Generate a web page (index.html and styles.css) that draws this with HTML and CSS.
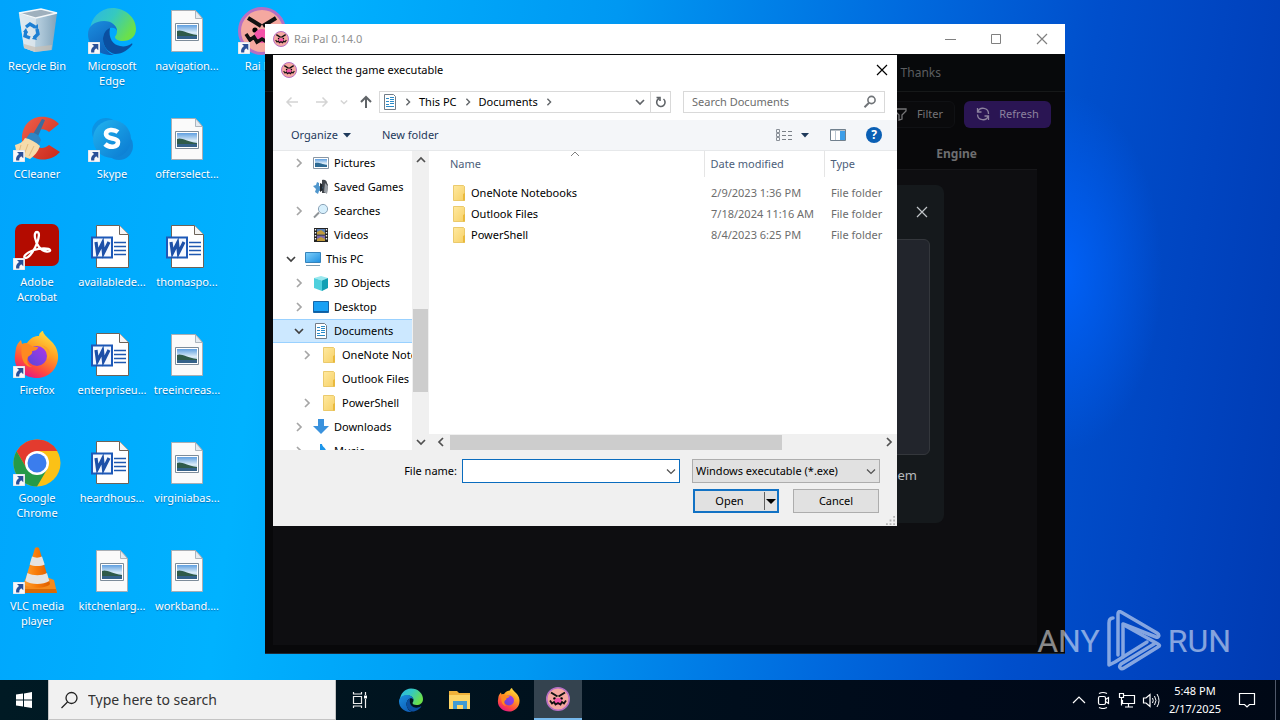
FILE: index.html
```html
<!DOCTYPE html>
<html lang="en">
<head>
<meta charset="utf-8">
<title>Desktop</title>
<link rel="stylesheet" href="styles.css">
</head>
<body>
<svg class="sprite" aria-hidden="true">
  <defs>
    <linearGradient id="g-bin" x1="0" x2="1"><stop offset="0" stop-color="#dfe5ea"/><stop offset=".55" stop-color="#c3cdd6"/><stop offset="1" stop-color="#8fa2b2"/></linearGradient>
    <linearGradient id="g-edge1" x1="0" y1="0" x2="1" y2=".5"><stop offset="0" stop-color="#2bb5e8"/><stop offset=".5" stop-color="#35c9c0"/><stop offset="1" stop-color="#6be04a"/></linearGradient>
    <linearGradient id="g-edge2" x1="0" y1="0" x2=".6" y2="1"><stop offset="0" stop-color="#1a8fe0"/><stop offset="1" stop-color="#0f5fb8"/></linearGradient>
    <linearGradient id="g-sky" x1="0" y1="0" x2="0" y2="1"><stop offset="0" stop-color="#5f9fe0"/><stop offset=".55" stop-color="#dcecf8"/><stop offset="1" stop-color="#7fb0d0"/></linearGradient>
    <linearGradient id="g-skype" x1="0" y1="0" x2="1" y2="1"><stop offset="0" stop-color="#22b4f0"/><stop offset="1" stop-color="#0a78d0"/></linearGradient>
    <linearGradient id="g-fox" x1=".8" y1="0" x2=".3" y2="1"><stop offset="0" stop-color="#ffe545"/><stop offset=".4" stop-color="#ffa023"/><stop offset=".75" stop-color="#ff4a3f"/><stop offset="1" stop-color="#e31587"/></linearGradient>
    <linearGradient id="g-globe" x1="1" y1="0" x2="0" y2="1"><stop offset="0" stop-color="#b035e8"/><stop offset="1" stop-color="#5548d8"/></linearGradient>
    <linearGradient id="g-cc" x1="0" y1="0" x2="1" y2="1"><stop offset="0" stop-color="#f0604a"/><stop offset="1" stop-color="#c8281c"/></linearGradient>
    <linearGradient id="g-folder" x1="0" y1="0" x2="1" y2="1"><stop offset="0" stop-color="#ffe9a0"/><stop offset="1" stop-color="#f7d167"/></linearGradient>
    <linearGradient id="g-pc" x1="0" y1="0" x2="1" y2="1"><stop offset="0" stop-color="#7fd0fb"/><stop offset="1" stop-color="#1e8fe0"/></linearGradient>
    <linearGradient id="g-cone" x1="0" x2="1"><stop offset="0" stop-color="#ffa030"/><stop offset=".5" stop-color="#f87a08"/><stop offset="1" stop-color="#dd5e00"/></linearGradient>
  </defs>
  <symbol id="shortcut" viewBox="0 0 12 12"><path d="M0 0h12v12H0z" fill="#f8f8fa" stroke="#b8c8d8" stroke-width=".6"/><path d="M4 2h6.300v6.200L8.200 6.200Q5.800 7.500 6.200 10.600H3.200Q2.300 6.800 6 4.100z" fill="#2a5098"/></symbol>
  <symbol id="bin" viewBox="0 0 48 48"><path d="M6 6l22-4 16 4-5 37-17 2-11-4z" fill="url(#g-bin)" opacity=".9"/><path d="M6 6l22-4 16 4-21 5z" fill="#9fb0bd" stroke="#f4f8fa" stroke-width="1.300"/><path d="M23 11l-1 34-11-4L6 7z" fill="#eef1f4" opacity=".6"/><path d="M11 37l11 3 17-2-1 5-16 2-11-4z" fill="#c7bfb4" opacity=".7"/><g fill="none" stroke="#1c7fd4" stroke-width="3.400"><path d="M13 20l4-3 5 3"/><path d="M24 22l1 5-4 4"/><path d="M17 31l-5-2 1-5"/></g><path d="M20 21l5 1 0-5zM22 28l-3 4 5 1zM10 25l5 1-2-5z" fill="#1c7fd4"/></symbol>
  <symbol id="edge" viewBox="0 0 48 48"><path d="M2 24A23 23 0 0 1 24 1c14 0 24 10 24 21 0 8-6 12-13 12-5 0-8-2-8-4 0-1 2-2 2-6 0-5-5-9-12-9C9 15 3 19 2 24z" fill="url(#g-edge1)"/><path d="M0 27c0-8 7-13 16-13 8 0 13 5 13 10-1-3-4-4-7-3-4 1-7 6-7 11 0 7 5 14 11 16C12 49 0 40 0 27z" fill="url(#g-edge2)"/><path d="M22 21c-4 1-7 6-7 11 0 8 6 14 12 15 8 0 14-5 17-9 1-1 0-2-1-1-3 2-7 3-11 2-7-1-12-8-10-18z" fill="#0b4fa0"/></symbol>
  <symbol id="photo" viewBox="0 0 48 48"><path d="M8.500 3.500h24l7 8v33h-31z" fill="#fafafa" stroke="#a9aeb4"/><path d="M32.500 3.500v8h7z" fill="#e4eaf0" stroke="#9aa4ae" stroke-width=".8"/><path d="M12.500 16.500h23v17h-23z" fill="#fff" stroke="#7d8c9a"/><path d="M14 18h20v14H14z" fill="url(#g-sky)"/><path d="M14 24c4-2 9 2 20 4v1H14z" fill="#2f5b4a"/><path d="M14 29h20v3H14z" fill="#35628a"/></symbol>
  <symbol id="word" viewBox="0 0 48 48"><path d="M8.500 2.500h23l9 9v33h-32z" fill="#fff" stroke="#6d6258"/><path d="M31.500 2.500v9h9" fill="#f4f4f4" stroke="#6d6258"/><path d="M26 19.500h12M26 23.500h12M26 27.500h12M26 31.500h12" stroke="#1f58b0" stroke-width="1.300"/><path d="M4 14.500h20v20H4z" fill="#f4f8ff" stroke="#1d59b8" stroke-width="2"/><path d="M8 19l1.500 11 5-10 1 10 5.500-11" fill="none" stroke="#1d50a8" stroke-width="3.200"/></symbol>
  <symbol id="ccleaner" viewBox="0 0 48 48"><path d="M46 9C34-4 9 0 9 24c0 19 24 28 38 13L36 30c-7 6-16 2-16-6s9-13 16-7z" fill="url(#g-cc)"/><path d="M29 4l3 1-9 21-6-2z" fill="#3a6d9e"/><path d="M17 18c5-1 9 2 11 7l-3 7-13-7z" fill="#2f86c4"/><path d="M12 23c5 1 11 4 15 8-2 6-6 10-10 13L2 38c2-3 0-6 0-8 4-1 8-3 10-7z" fill="#f6dcab"/><path d="M8 30l-2 7M15 29l-4 11M21 31l-5 10" stroke="#e2bb80" stroke-width="1" fill="none"/></symbol>
  <symbol id="skype" viewBox="0 0 48 48"><circle cx="18" cy="17" r="14" fill="#0c94e4"/><circle cx="31" cy="31" r="14" fill="#0f86d8"/><circle cx="24" cy="24" r="19" fill="url(#g-skype)"/><path d="M30 17c-4-3-12-3-12 2 0 6 12 3 12 8 0 6-9 6-13 2" fill="none" stroke="#fff" stroke-width="4.600"/></symbol>
  <symbol id="acrobat" viewBox="0 0 48 48"><rect x="2" y="1" width="44" height="42" rx="7" fill="#b30b00"/><path d="M24 9c3 0 2 6 0 11-2 6-7 14-11 15-4 0-1-5 8-8 6-2 15-2 16 0s-6 3-11-3c-4-5-6-15-2-15z" fill="none" stroke="#fff" stroke-width="2.300"/></symbol>
  <symbol id="firefox" viewBox="0 0 48 48"><path d="M3 17c1-4 3-6 5-8l1 4 5-1c4-6 8-7 12-7 0-3 3-5 4-5 1 7 14 10 15 24 1 13-9 23-21 23S0 38 2 24z" fill="url(#g-fox)"/><circle cx="24" cy="25" r="10" fill="url(#g-globe)"/><path d="M9 13c5-2 8 1 11 3h5c0 3-4 4-6 4 1 3-2 4-4 6-2 5 0 8 4 10C10 36 7 25 9 13z" fill="#ff8a20"/><path d="M28 14c6 3 8 9 6 14 5-3 4-12-6-14z" fill="#ff9f28"/></symbol>
  <symbol id="chrome" viewBox="0 0 48 48"><circle cx="24" cy="24" r="23.500" fill="#fbc116"/><path d="M24 .5A23.500 23.500 0 0 0 3.600 12.300L14 30l10-18h20.500A23.500 23.500 0 0 0 24 .5z" fill="#e33b2e"/><path d="M3.600 12.300A23.500 23.500 0 0 0 24 47.500L34.300 30 24 36 14 30z" fill="#259a48"/><circle cx="24" cy="24" r="12" fill="#fff"/><circle cx="24" cy="24" r="9.500" fill="#3b7ded"/></symbol>
  <symbol id="vlc" viewBox="0 0 48 48"><path d="M13 31h23l5 2 3 13H6z" fill="#f58a1d"/><path d="M6 46l2-4h35l1 4z" fill="#d96a06"/><path d="M22 1c1-1 3-1 4 0l11 36c-4 5-21 5-26 0z" fill="url(#g-cone)"/><path d="M19 9.500c3 1.500 7 1.500 10 0l2.700 8c-4 2-11 2-15 0zM14.400 26c6 3 14 3 19.600 0l2.300 8c-6 4-18 4-24 0z" fill="#e6e3e0"/></symbol>
  <symbol id="raipal" viewBox="0 0 48 48"><circle cx="24" cy="24" r="22.500" fill="#f5a8a0" stroke="#b56fc4" stroke-width="3"/><path d="M10 11l13 8M38 11l-13 8" stroke="#111" stroke-width="4"/><circle cx="17" cy="23" r="2.600"/><circle cx="31" cy="23" r="2.600"/><ellipse cx="24" cy="29" rx="8" ry="7" fill="#f453a8"/><path d="M8 27l4 6 4-3 3 5 5-3 5 3 3-5 4 3 4-6" fill="none" stroke="#111" stroke-width="3.500"/></symbol>
  <symbol id="doc" viewBox="0 0 16 16"><path d="M2.500.5h9l2 2v13h-11z" fill="#fff" stroke="#707c88"/><path d="M4 4.500h3M4 7.500h3M4 10.500h3M4 12.500h8M8 3.500h4M8 5.500h4M8 7.500h4M8 9.500h4" stroke="#2b8bc8"/></symbol>
  <symbol id="folder" viewBox="0 0 16 16"><path d="M2.500.5h10l1 1v14h-11z" fill="url(#g-folder)" stroke="#e6c056" stroke-width=".8"/><path d="M12 9l2-1v7.500h-2z" fill="#e9b93c"/></symbol>
  <symbol id="pictures" viewBox="0 0 16 16"><path d="M.5 2.500h15v11H.5z" fill="#fff" stroke="#8896a4"/><path d="M2 4h12v8H2z" fill="url(#g-sky)"/><path d="M2 8c4-1 6 1 12 2v2H2z" fill="#2d6a94"/></symbol>
  <symbol id="games" viewBox="0 0 16 16"><path d="M9 1c3-1 5 1 5 3l1 2-1 8h-5z" fill="#41464c"/><path d="M12 4l3 3-1 8-3-2z" fill="#9aa0a6"/><path d="M0 7l3-1 1-3 2 1v3l4 1v3l-4 1-1 3-3-2 1-3z" fill="#4f96cc"/><path d="M7 4l2 1 1 6-3 2z" fill="#22272c"/></symbol>
  <symbol id="searches" viewBox="0 0 16 16"><path d="M1 14.500l5-5" stroke="#8f9498" stroke-width="2"/><circle cx="10" cy="6" r="4.600" fill="#d6effc" stroke="#8ba4b8"/></symbol>
  <symbol id="videos" viewBox="0 0 16 16"><path d="M1 1h14v14H1z" fill="#222"/><path d="M4 2h8v5.500H4z" fill="#5a80b4"/><path d="M4 8.500h8V14H4z" fill="#7a68b0"/><path d="M4 5l4-2 4 3v1.500H4zM4 12l4-2 4 2v2H4z" fill="#c09a3c"/><path d="M2.500 2v12M13.500 2v12" stroke="#f4f4f4" stroke-width="1.400" stroke-dasharray="1.500 1.500"/></symbol>
  <symbol id="pc" viewBox="0 0 16 16"><path d="M.5 1.500h15v10H.5z" fill="url(#g-pc)" stroke="#3583bb"/><path d="M1 14.500h14" stroke="#7b9bb0"/></symbol>
  <symbol id="cube" viewBox="0 0 16 16"><path d="M1 3l7-2 7 2-6 2.500z" fill="#9ae8ee"/><path d="M1 3l8 2.500V16l-8-3z" fill="#4fd0dd"/><path d="M15 3L9 5.500V16l6-3z" fill="#12a0b4"/></symbol>
  <symbol id="screen" viewBox="0 0 16 16"><path d="M.5 2.500h15v11H.5z" fill="#18a0f4" stroke="#1565a8"/><path d="M1 12.500h14" stroke="#0b5fa4"/></symbol>
  <symbol id="down" viewBox="0 0 16 16"><path d="M5 0h6v7h5l-8 8-8-8h5z" fill="#3a92dd"/></symbol>
  <symbol id="music" viewBox="0 0 16 16"><path d="M7 1l2 0c0 3 5 4 4 9l-3-3v6a4 3 0 1 1-3-2z" fill="#1d96ea"/></symbol>
  <symbol id="chev-r" viewBox="0 0 10 10"><path d="M3 1l4 4-4 4" fill="none" stroke="currentColor" stroke-width="1.700"/></symbol>
  <symbol id="chev-d" viewBox="0 0 10 10"><path d="M1 3l4 4 4-4" fill="none" stroke="currentColor" stroke-width="1.700"/></symbol>
  <symbol id="chev-l" viewBox="0 0 10 10"><path d="M7 1L3 5l4 4" fill="none" stroke="currentColor" stroke-width="1.700"/></symbol>
  <symbol id="chev-u" viewBox="0 0 10 10"><path d="M1 7l4-4 4 4" fill="none" stroke="currentColor" stroke-width="1.700"/></symbol>
  <symbol id="thin-u" viewBox="0 0 10 10"><path d="M1 7l4-4 4 4" fill="none" stroke="currentColor"/></symbol>
  <symbol id="thin-d" viewBox="0 0 10 10"><path d="M1 3.500l4 4 4-4" fill="none" stroke="currentColor" stroke-width="1.200"/></symbol>
  <symbol id="caret" viewBox="0 0 10 10"><path d="M1 3h8L5 7.500z" fill="currentColor"/></symbol>
  <symbol id="arrow-l" viewBox="0 0 14 14"><path d="M13 7H2M6.500 2.500L2 7l4.500 4.500" fill="none" stroke="currentColor" stroke-width="1.500"/></symbol>
  <symbol id="arrow-r" viewBox="0 0 14 14"><path d="M1 7h11M7.500 2.500L12 7l-4.500 4.500" fill="none" stroke="currentColor" stroke-width="1.500"/></symbol>
  <symbol id="arrow-u" viewBox="0 0 14 14"><path d="M7 13V2M2 7l5-5 5 5" fill="none" stroke="currentColor" stroke-width="2"/></symbol>
  <symbol id="close" viewBox="0 0 12 12"><path d="M1 1l10 10M11 1L1 11" fill="none" stroke="currentColor" stroke-width="1.200"/></symbol>
  <symbol id="lens" viewBox="0 0 14 14"><circle cx="8.500" cy="5" r="3.600" fill="none" stroke="currentColor" stroke-width="1.600"/><path d="M6 7.800L1.500 12.300" stroke="currentColor" stroke-width="2"/></symbol>
  <symbol id="sync" viewBox="0 0 14 14"><path d="M1.500 1v4h4M12.500 13V9h-4M1.800 5A5.500 5.500 0 0 1 12.500 7M12.200 9A5.500 5.500 0 0 1 1.500 7.500" fill="none" stroke="currentColor" stroke-width="1.300"/></symbol>
</svg>

<main class="desktop">
  <ul class="icons">
    <li><svg><use href="#bin"/></svg><span>Recycle Bin</span></li>
    <li><svg><use href="#ccleaner"/></svg><svg class="badge"><use href="#shortcut"/></svg><span>CCleaner</span></li>
    <li><svg><use href="#acrobat"/></svg><svg class="badge"><use href="#shortcut"/></svg><span>Adobe Acrobat</span></li>
    <li><svg><use href="#firefox"/></svg><svg class="badge"><use href="#shortcut"/></svg><span>Firefox</span></li>
    <li><svg><use href="#chrome"/></svg><svg class="badge"><use href="#shortcut"/></svg><span>Google Chrome</span></li>
    <li><svg><use href="#vlc"/></svg><svg class="badge"><use href="#shortcut"/></svg><span>VLC media player</span></li>
    <li><svg><use href="#edge"/></svg><svg class="badge"><use href="#shortcut"/></svg><span>Microsoft Edge</span></li>
    <li><svg><use href="#skype"/></svg><svg class="badge"><use href="#shortcut"/></svg><span>Skype</span></li>
    <li><svg><use href="#word"/></svg><span>availablede...</span></li>
    <li><svg><use href="#word"/></svg><span>enterpriseu...</span></li>
    <li><svg><use href="#word"/></svg><span>heardhous...</span></li>
    <li><svg><use href="#photo"/></svg><span>kitchenlarg...</span></li>
    <li><svg><use href="#photo"/></svg><span>navigation...</span></li>
    <li><svg><use href="#photo"/></svg><span>offerselect...</span></li>
    <li><svg><use href="#word"/></svg><span>thomaspo...</span></li>
    <li><svg><use href="#photo"/></svg><span>treeincreas...</span></li>
    <li><svg><use href="#photo"/></svg><span>virginiabas...</span></li>
    <li><svg><use href="#photo"/></svg><span>workband....</span></li>
    <li><svg><use href="#raipal"/></svg><svg class="badge"><use href="#shortcut"/></svg><span>Rai Pal</span></li>
  </ul>

  <section class="app" aria-label="Rai Pal">
    <header class="app-title">
      <svg class="i16"><use href="#raipal"/></svg><span>Rai Pal 0.14.0</span>
      <div class="win-buttons">
        <button aria-label="Minimize"><svg class="i12" viewBox="0 0 12 12"><path d="M1 6.500h11" stroke="currentColor"/></svg></button>
        <button aria-label="Maximize"><svg class="i12" viewBox="0 0 12 12"><path d="M1.500 1.500h9v9h-9z" fill="none" stroke="currentColor"/></svg></button>
        <button aria-label="Close"><svg class="i12"><use href="#close"/></svg></button>
      </div>
    </header>
    <nav class="app-nav"><a href="#thanks">Thanks</a></nav>
    <div class="app-tools">
      <button class="filter"><svg class="i14" viewBox="0 0 14 14"><path d="M1 2h11v2L8 8v4l-3 1V8L1 4z" fill="none" stroke="currentColor" stroke-width="1.300"/></svg>Filter</button>
      <button class="refresh"><svg class="i14"><use href="#sync"/></svg>Refresh</button>
    </div>
    <div class="app-grid"><div class="grid-head">Engine</div></div>
    <div class="modal">
      <button class="modal-close" aria-label="Close dialog"><svg class="i12"><use href="#close"/></svg></button>
      <div class="drop"></div>
      <p>them</p>
    </div>
  </section>

  <section class="dialog" role="dialog" aria-label="Select the game executable">
    <header class="dlg-title">
      <svg class="i16"><use href="#raipal"/></svg><span>Select the game executable</span>
      <button aria-label="Close"><svg class="i12"><use href="#close"/></svg></button>
    </header>
    <div class="dlg-nav">
      <div class="history">
        <button class="off" aria-label="Back"><svg class="i14"><use href="#arrow-l"/></svg></button>
        <button class="off" aria-label="Forward"><svg class="i14"><use href="#arrow-r"/></svg></button>
        <button class="off small" aria-label="Recent"><svg class="i8"><use href="#chev-d"/></svg></button>
        <button aria-label="Up"><svg class="i14"><use href="#arrow-u"/></svg></button>
      </div>
      <div class="address">
        <svg class="i16"><use href="#doc"/></svg>
        <svg class="i8 sep"><use href="#chev-r"/></svg><span>This PC</span>
        <svg class="i8 sep"><use href="#chev-r"/></svg><span>Documents</span>
        <svg class="i8 sep"><use href="#chev-r"/></svg>
        <button class="drop-btn" aria-label="Previous locations"><svg class="i10"><use href="#chev-d"/></svg></button>
        <button class="reload" aria-label="Refresh"><svg class="i12" viewBox="0 0 12 12"><path d="M8.500 3A4.200 4.200 0 1 1 4 2.500M1.500 1.500H5V5" fill="none" stroke="currentColor" stroke-width="1.600"/></svg></button>
      </div>
      <label class="search"><input type="text" placeholder="Search Documents" aria-label="Search Documents"><svg class="i14"><use href="#lens"/></svg></label>
    </div>
    <div class="dlg-tools">
      <button>Organize<svg class="i10"><use href="#caret"/></svg></button>
      <button class="new">New folder</button>
      <button class="view" aria-label="Change view"><svg class="i16" viewBox="0 0 16 16"><path d="M.5 2.500h3v3h-3zM.5 6.500h3v3h-3zM.5 10.500h3v3h-3z" fill="none" stroke="#8a9098"/><path d="M6 4.500h4M12 4.500h4M6 8.500h4M12 8.500h4M6 12.500h4M12 12.500h4" stroke="#7a8088"/></svg><svg class="i10"><use href="#caret"/></svg></button>
      <button class="pane" aria-label="Preview pane"><svg class="i16" viewBox="0 0 16 16"><path d="M.5 2.500h15v11H.5z" fill="#fff" stroke="#71808e"/><path d="M.5 3h15" stroke="#71808e"/><path d="M10 4h5v9h-5z" fill="#3d9ee8"/><path d="M5.500 4v9" stroke="#b8c4d0"/></svg></button>
      <button class="help" aria-label="Help">?</button>
    </div>
    <div class="dlg-main">
      <ul class="tree">
        <li><svg class="i10 tw"><use href="#chev-r"/></svg><svg class="i16"><use href="#pictures"/></svg>Pictures</li>
        <li><i class="tw"></i><svg class="i16"><use href="#games"/></svg>Saved Games</li>
        <li><svg class="i10 tw"><use href="#chev-r"/></svg><svg class="i16"><use href="#searches"/></svg>Searches</li>
        <li><i class="tw"></i><svg class="i16"><use href="#videos"/></svg>Videos</li>
        <li class="root"><svg class="i10 tw open"><use href="#chev-d"/></svg><svg class="i16"><use href="#pc"/></svg>This PC</li>
        <li><svg class="i10 tw"><use href="#chev-r"/></svg><svg class="i16"><use href="#cube"/></svg>3D Objects</li>
        <li><svg class="i10 tw"><use href="#chev-r"/></svg><svg class="i16"><use href="#screen"/></svg>Desktop</li>
        <li class="selected"><svg class="i10 tw open"><use href="#chev-d"/></svg><svg class="i16"><use href="#doc"/></svg>Documents</li>
        <li class="child"><svg class="i10 tw"><use href="#chev-r"/></svg><svg class="i16"><use href="#folder"/></svg>OneNote Notebooks</li>
        <li class="child"><i class="tw"></i><svg class="i16"><use href="#folder"/></svg>Outlook Files</li>
        <li class="child"><svg class="i10 tw"><use href="#chev-r"/></svg><svg class="i16"><use href="#folder"/></svg>PowerShell</li>
        <li><svg class="i10 tw"><use href="#chev-r"/></svg><svg class="i16"><use href="#down"/></svg>Downloads</li>
        <li><svg class="i10 tw"><use href="#chev-r"/></svg><svg class="i16"><use href="#music"/></svg>Music</li>
      </ul>
      <div class="vscroll"><svg class="i10"><use href="#chev-u"/></svg><div class="track"><div class="thumb"></div></div><svg class="i10"><use href="#chev-d"/></svg></div>
      <div class="list">
        <svg class="i10 sort"><use href="#thin-u"/></svg>
        <table>
          <thead><tr><th>Name</th><th class="date">Date modified</th><th class="type">Type</th></tr></thead>
          <tbody>
            <tr><td><div class="cell"><svg class="i16"><use href="#folder"/></svg>OneNote Notebooks</div></td><td>2/9/2023 1:36 PM</td><td>File folder</td></tr>
            <tr><td><div class="cell"><svg class="i16"><use href="#folder"/></svg>Outlook Files</div></td><td>7/18/2024 11:16 AM</td><td>File folder</td></tr>
            <tr><td><div class="cell"><svg class="i16"><use href="#folder"/></svg>PowerShell</div></td><td>8/4/2023 6:25 PM</td><td>File folder</td></tr>
          </tbody>
        </table>
        <div class="hscroll"><svg class="i10"><use href="#chev-l"/></svg><div class="track"><div class="thumb"></div></div><svg class="i10"><use href="#chev-r"/></svg></div>
      </div>
    </div>
    <footer class="dlg-foot">
      <div class="foot-row">
        <label for="file-name">File name:</label>
        <div class="combo name-box"><input id="file-name" type="text"><svg class="i10"><use href="#thin-d"/></svg></div>
        <div class="combo type-box"><select aria-label="File type"><option>Windows executable (*.exe)</option></select><svg class="i10"><use href="#thin-d"/></svg></div>
      </div>
      <div class="foot-row actions">
        <div class="split"><button class="open">Open</button><button class="more" aria-label="Open options"><svg class="i12" viewBox="0 0 12 12"><path d="M1 4h10L6 9z" fill="#000"/></svg></button></div>
        <button class="cancel">Cancel</button>
      </div>
      <svg class="grip" viewBox="0 0 10 10"><path d="M8 0h2v2H8zM4 4h2v2H4zM8 4h2v2H8zM0 8h2v2H0zM4 8h2v2H4zM8 8h2v2H8z" fill="#b4b4b4"/></svg>
    </footer>
  </section>

  <div class="watermark">
    <span>ANY</span>
    <svg viewBox="0 0 56 62"><g fill="none" stroke="currentColor" stroke-width="3.500" stroke-linejoin="round" stroke-linecap="round"><path d="M7 8C4 8 3 10 3 13v42l6-3 32-20"/><path d="M12 45V4c0-2 1-3 3-2l36 21c3 2 2 5-1 4L17 14v33"/><path d="M18 15l34 19c2 1 2 2 0 3L18 58c-3 2-6-1-3-4l33-20"/></g></svg>
    <span>RUN</span>
  </div>
</main>

<footer class="taskbar">
  <button class="start" aria-label="Start"><svg class="i16" viewBox="0 0 16 16"><path d="M0 2.500L7 1.500V7.500H0zM8 1.400L16 0v7.500H8zM0 8.500h7v6L0 13.500zM8 8.500h8V16l-8-1.300z" fill="#fff"/></svg></button>
  <label class="task-search"><svg class="i18" viewBox="0 0 18 18"><circle cx="10.500" cy="7" r="5.500" fill="none" stroke="#222" stroke-width="1.300"/><path d="M6.500 11L.5 17" stroke="#222" stroke-width="1.300"/></svg><input type="text" placeholder="Type here to search" aria-label="Search"></label>
  <div class="tasks">
    <button class="view-task" aria-label="Task view"><svg class="i18" viewBox="0 0 18 18"><path d="M2.500 5.500h8v7h-8zM2.500 1v2h8V1M2.500 17v-2h8v2M14.500 1v3M14.500 8v9" fill="none" stroke="#eee" stroke-width="1.200"/><path d="M13 4.500h3v3h-3z" fill="#fff"/></svg></button>
    <button aria-label="Edge"><svg class="i24"><use href="#edge"/></svg></button>
    <button aria-label="File Explorer"><svg class="i24" viewBox="0 0 24 24"><path d="M1 3h8l2 2h11v16H1z" fill="#f0b23a"/><path d="M1 7h21v14H1z" fill="#fdd567"/><path d="M5 13h14v8h-4v-4H9v4H5z" fill="#3f9ad4"/></svg></button>
    <button aria-label="Firefox"><svg class="i24"><use href="#firefox"/></svg></button>
    <button class="active" aria-label="Rai Pal"><svg class="i24"><use href="#raipal"/></svg></button>
  </div>
  <div class="tray">
    <svg class="i14 up" viewBox="0 0 14 14"><path d="M1 10l6-6 6 6" fill="none" stroke="#fff" stroke-width="1.200"/></svg>
    <svg class="i18" viewBox="0 0 18 18"><rect x="4.500" y="5.500" width="7" height="8" rx="1.500" fill="none" stroke="#fff" stroke-width="1.200"/><path d="M11.500 8.500l3-2v6l-3-2M5 2.500q4-2 8 0M5 16.500q4 2 8 0" fill="none" stroke="#fff" stroke-width="1.200"/></svg>
    <svg class="i18" viewBox="0 0 18 18"><path d="M5 4.500h11.500v8H4.500V9M10.500 12.500v3M7 16h8M1.500 2.500h4v4h-4zM3.500 6.500v8" fill="none" stroke="#fff" stroke-width="1.200"/></svg>
    <svg class="i18" viewBox="0 0 18 18"><path d="M1.500 7v5H4l4 3.500v-12L4 7z" fill="none" stroke="#fff" stroke-width="1.200"/><path d="M10.500 7q1.500 2.500 0 5M12.500 5q3 4.500 0 9M15 3q4 6.500 0 13" fill="none" stroke="#fff"/></svg>
    <div class="clock"><time>5:48 PM</time><time>2/17/2025</time></div>
    <svg class="i18 note" viewBox="0 0 18 18"><path d="M1.500 2.500h15v11h-5L9 16l-2.500-2.500h-5z" fill="none" stroke="#fff" stroke-width="1.200"/></svg>
  </div>
</footer>
</body>
</html>
```
FILE: styles.css
```css
* { box-sizing: border-box; }
body {
  margin: 0;
  height: 100vh;
  display: flex;
  flex-direction: column;
  overflow: hidden;
  font: 11px/16px "Noto Sans", "Open Sans", sans-serif;
  color: #000;
}
ul { margin: 0; padding: 0; list-style: none; }
p { margin: 0; }
svg { flex: none; display: block; }
button, input, select { font: inherit; color: inherit; margin: 0; padding: 0; border: 0; background: none; outline: 0; }
button { display: flex; align-items: center; justify-content: center; }
.sprite { position: absolute; width: 0; height: 0; }
.i8 { width: 8px; height: 8px; }
.i10 { width: 10px; height: 10px; }
.i12 { width: 12px; height: 12px; }
.i14 { width: 14px; height: 14px; }
.i16 { width: 16px; height: 16px; }
.i18 { width: 18px; height: 18px; }
.i24 { width: 24px; height: 24px; }

/* Desktop */
.desktop {
  position: relative;
  flex: 1;
  min-height: 0;
  background:
    radial-gradient(ellipse 100px 180px at 83% 40%, rgba(0, 100, 255, .85), rgba(0, 84, 220, 0)),
    linear-gradient(98deg, #00a4fc 0%, #00b2ff 22%, #0098f2 45%, #006ade 66%, #004fcc 80%, #0044c0 90%, #003ab2 100%);
}
.icons {
  height: 100%;
  display: grid;
  grid-auto-flow: column;
  grid-template-rows: repeat(6, 108px);
  grid-auto-columns: 75px;
  justify-content: start;
}
.icons li {
  position: relative;
  display: flex;
  flex-direction: column;
  align-items: center;
  gap: 3px;
  padding: 7px 4px 0 3px;
  color: #fff;
  text-align: center;
  line-height: 15px;
}
.icons svg { width: 48px; height: 48px; }
.icons .badge { position: absolute; left: 13px; top: 42px; width: 12px; height: 12px; }
.icons span { text-shadow: 0 1px 1px rgba(0, 50, 110, .5); }

/* Rai Pal window */
.app {
  position: absolute;
  left: 265px;
  right: 215px;
  top: 24px;
  bottom: 26px;
  display: flex;
  flex-direction: column;
  background: #08080a;
  color: #5a5a5c;
  border-bottom: 1px solid #1c2a38;
}
.app-title {
  height: 30px;
  flex: none;
  display: flex;
  align-items: center;
  gap: 5px;
  padding-left: 8px;
  background: #fff;
  color: #909090;
}
.win-buttons { display: flex; margin-left: auto; }
.win-buttons button { width: 46px; height: 30px; color: #808080; }
.app-nav {
  height: 38px;
  flex: none;
  display: flex;
  align-items: center;
  justify-content: flex-end;
  padding-right: 124px;
  background: #07090b;
  border-bottom: 1px solid #161819;
  font-size: 12px;
}
.app-nav a { color: #5c5e60; text-decoration: none; }
.app-tools { display: flex; justify-content: flex-end; gap: 9px; padding: 9px 14px 9px 0; }
.app-tools button { height: 27px; gap: 9px; padding-bottom: 1px; border-radius: 6px; }
.app-tools .filter { width: 84px; justify-content: flex-end; background: #0a0a0c; border: 1px solid #101114; color: #747476; padding-right: 11px; }
.app-tools .refresh { width: 87px; background: #2a1553; color: #8c829e; }
.app-grid { flex: 1; margin: 2px 28px 8px 8px; background: #0e0e11; }
.grid-head {
  height: 31px;
  display: flex;
  align-items: center;
  justify-content: flex-end;
  padding-right: 60px;
  background: #08080a;
  border-bottom: 1px solid #17171a;
  font-weight: 700;
  font-size: 12px;
  color: #6e6e70;
}
.modal {
  position: absolute;
  left: 121px;
  right: 121px;
  top: 161px;
  bottom: 130px;
  display: flex;
  flex-direction: column;
  gap: 12px;
  padding: 12px 14px;
  border-radius: 8px;
  background: #15191c;
  color: #b8babc;
}
.modal-close { align-self: flex-end; width: 16px; height: 30px; color: #c0c4c8; }
.drop { height: 216px; border-radius: 6px; border: 1px solid #34373c; background: #22252c; }
.modal p { text-align: right; padding-right: 13px; font-size: 13px; }

/* File dialog */
.dialog {
  position: absolute;
  left: 273px;
  right: 383px;
  top: 55px;
  bottom: 154px;
  display: flex;
  flex-direction: column;
  background: #fff;
}
.dlg-title { height: 30px; flex: none; display: flex; align-items: center; gap: 5px; padding: 0 0 1px 8px; }
.dlg-title button { width: 30px; height: 28px; margin-left: auto; }
.dlg-nav { height: 35px; flex: none; display: flex; align-items: center; gap: 12px; padding: 0 12px 1px; }
.history { display: flex; align-items: center; width: 82px; gap: 16px; color: #606468; }
.history .off { color: #d4d4d4; }
.history .small { margin: 0 -5px; }
.address { flex: 1; height: 22px; display: flex; align-items: center; border: 1px solid #d9d9d9; padding-left: 2px; }
.address .sep { color: #606468; margin: 0 6px; }
.address .sep + span { margin: 0 1px; }
.address button { height: 20px; color: #606468; }
.address .drop-btn { width: 20px; margin-left: auto; }
.address .reload { width: 20px; border-left: 1px solid #d9d9d9; }
.search { width: 202px; height: 22px; display: flex; align-items: center; border: 1px solid #d9d9d9; padding: 0 7px 0 8px; color: #707478; }
.search input { flex: 1; min-width: 0; height: 16px; }
input::placeholder { color: #6d6d6d; opacity: 1; }
.dlg-tools {
  height: 31px;
  flex: none;
  display: flex;
  align-items: center;
  padding: 0 15px 1px 18px;
  background: #f4f6f9;
  border-bottom: 1px solid #e6e8ea;
  color: #1e395b;
}
.dlg-tools button { gap: 4px; }
.dlg-tools .new { margin-left: 30px; }
.dlg-tools .view { margin-left: auto; gap: 8px; }
.dlg-tools .pane { margin: 0 20px; }
.dlg-tools .help { width: 16px; height: 16px; border-radius: 50%; background: #0a5fb4; color: #fff; font-weight: 700; font-size: 12px; }
.dlg-main { flex: 1; min-height: 0; display: flex; }
.tree { width: 139px; overflow: hidden; }
.tree li { height: 24px; display: flex; align-items: center; gap: 5px; padding: 0 0 1px 21px; white-space: nowrap; border: 1px solid transparent; border-width: 1px 0; }
.tree .tw { width: 10px; flex: none; margin-right: 4px; color: #a6a6a6; }
.tree .open { color: #404040; }
.tree .root { padding-left: 13px; }
.tree .child { padding-left: 29px; }
.tree .selected { background: #cce8ff; border-color: #99d1ff; }
.vscroll { width: 17px; display: flex; flex-direction: column; align-items: center; padding: 4px 1px 3px; background: #f0f0f0; color: #505050; }
.vscroll .track { flex: 1; width: 15px; display: flex; flex-direction: column; padding-top: 144px; }
.vscroll .thumb { height: 83px; background: #cdcdcd; }
.list { flex: 1; min-width: 0; position: relative; display: flex; flex-direction: column; }
.sort { position: absolute; left: 141px; top: -2px; color: #808080; }
table { width: 100%; table-layout: fixed; border-collapse: collapse; }
th { height: 26px; padding: 0 0 0 6px; font-weight: 400; text-align: left; color: #4c607a; border-left: 1px solid #e5e5e5; }
th:first-child { padding-left: 21px; border: 0; }
.date { width: 120px; }
.type { width: 73px; }
tbody::before { content: ""; display: block; height: 5px; }
td { height: 21px; padding: 0 0 0 7px; color: #6d6d6d; white-space: nowrap; }
td:first-child { padding-left: 22px; color: #000; }
.cell { display: flex; align-items: center; gap: 4px; }
.hscroll { height: 16px; margin-top: auto; display: flex; align-items: center; padding: 0 3px 0 7px; background: #f0f0f0; color: #505050; }
.hscroll .track { flex: 1; height: 15px; margin: 0 3px 0 4px; }
.hscroll .thumb { width: 77%; height: 100%; background: #cdcdcd; }
.dlg-foot { position: relative; flex: none; height: 76px; display: flex; flex-direction: column; gap: 6px; padding: 9px 17px 0 0; background: #f0f0f0; }
.foot-row { display: flex; align-items: center; justify-content: flex-end; height: 24px; }
.combo { position: relative; height: 24px; display: flex; align-items: center; }
.combo input, .combo select { width: 100%; height: 100%; appearance: none; padding: 0 20px 1px 3px; }
.combo svg { position: absolute; right: 3px; color: #505050; }
.name-box { width: 218px; margin: 0 12px 0 5px; background: #fff; border: 1px solid #0a6cbe; }
.type-box { width: 188px; background: #e1e1e1; border: 1px solid #adadad; }
.foot-row label { padding-bottom: 1px; }
.split { display: flex; width: 86px; height: 24px; background: #e1e1e1; border: 2px solid #1272c4; }
.split .open { flex: 1; padding-bottom: 1px; }
.split .more { width: 13px; margin: 1px 0; border-left: 1px solid #606060; }
.actions { gap: 14px; padding-right: 1px; }
.cancel { width: 86px; height: 24px; background: #e1e1e1; border: 1px solid #adadad; padding-bottom: 1px; }
.grip { position: absolute; right: 2px; bottom: 1px; width: 9px; height: 9px; }

.watermark {
  position: absolute;
  right: 49px;
  bottom: 8px;
  display: flex;
  align-items: center;
  gap: 6px;
  font: 32px/62px "Liberation Sans Narrow", "Roboto", sans-serif;
  color: #fff;
  opacity: .52;
}
.watermark svg { width: 56px; height: 62px; }

/* Taskbar */
.taskbar { height: 40px; flex: none; display: flex; background: linear-gradient(90deg, #001a24, #00121e 40%, #000a1a 75%, #000816); color: #fff; }
.start { width: 48px; }
.task-search { width: 288px; display: flex; align-items: center; gap: 9px; padding-left: 12px; background: #f1f1f1; border: 1px solid #c4c4c4; border-top: 0; font-size: 14px; }
.task-search input { flex: 1; min-width: 0; color: #333; }
.task-search input::placeholder { color: #333; }
.tasks { display: flex; gap: 1px; }
.tasks button { width: 48px; }
.tasks .view-task { margin-right: 2px; }
.tasks .active { background: #34434f; border-bottom: 2px solid #76b9ed; }
.tray { margin-left: auto; display: flex; align-items: center; gap: 6px; padding-right: 4px; border-right: 1px solid #50586a; margin-right: 4px; }
.tray .up { margin-right: 2px; }
.clock { width: 66px; display: flex; flex-direction: column; align-items: center; line-height: 18px; margin-left: -4px; }
.note { margin: 0 15px 0 4px; }
```
